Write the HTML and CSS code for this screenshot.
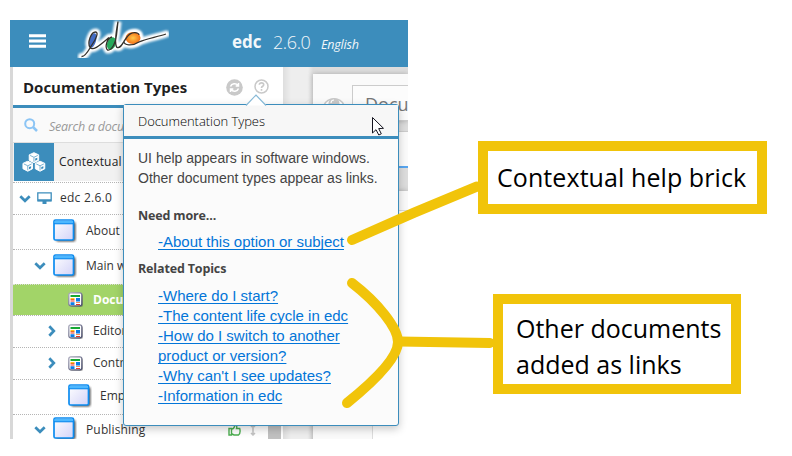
FILE: index.html
```
<!DOCTYPE html>
<html lang="en">
<head>
<meta charset="utf-8">
<title>edc – Documentation Types</title>
<link rel="stylesheet" href="styles.css">
</head>
<body>
<svg width="0" height="0" class="defs" aria-hidden="true">
  <defs>
    <linearGradient id="pane" x1="0" y1="0" x2="1" y2="1"><stop offset="0" stop-color="#fff"/><stop offset="1" stop-color="#d3d3f8"/></linearGradient>
    <linearGradient id="rim" x1="0" y1="0" x2="1" y2="1"><stop offset="0" stop-color="#a9a9bb"/><stop offset="1" stop-color="#4d5170"/></linearGradient>
    <radialGradient id="sun"><stop offset="0" stop-color="#ffc94a"/><stop offset="1" stop-color="#f36f16"/></radialGradient>
    <filter id="soft" x="-30%" y="-30%" width="160%" height="160%"><feGaussianBlur stdDeviation="1"/></filter>
    <symbol id="window" viewBox="0 0 24 24">
      <rect x="3" y="3" width="19.500" height="19.500" rx="2" fill="#333" opacity=".85" filter="url(#soft)"/>
      <rect x="1" y="1" width="19.500" height="20" rx="1.500" fill="url(#pane)" stroke="#0c8cf0" stroke-width="1.700"/>
      <path d="M1.500 2h18.500v2.200H1.500z" fill="#4db8ff"/><path d="M1 4.700h19.500" stroke="#0c8cf0" stroke-width="1.200"/>
    </symbol>
    <symbol id="page" viewBox="0 0 16 16">
      <rect x="2" y="2" width="13" height="13" rx="2" fill="#555" opacity=".5"/>
      <rect x=".8" y=".8" width="13" height="13" rx="2" fill="#fff" stroke="url(#rim)" stroke-width="1.300"/>
      <path d="M2.500 3h9.500v2h-9.500z" fill="#16a835"/><path d="M2.500 6h4v.9h-4z" fill="#ffc000"/><path d="M2.500 7h4v1h-4zM8 10.200h4v.9h-4z" fill="#f06b22"/><path d="M2.500 8.600h4v.8h-4zM8 12h4v.9h-4z" fill="#e7352b"/><path d="M8 6h4v3.400h-4zM2.500 10.200h4v2.700h-4z" fill="#0b7de8"/>
    </symbol>
    <symbol id="down" viewBox="0 0 12 8"><path d="M1.300 1.300 6 5.800l4.700-4.500" fill="none" stroke="#3c8dbc" stroke-width="2.700"/></symbol>
    <symbol id="right" viewBox="0 0 8 12"><path d="M1.300 1.300 5.800 6l-4.500 4.700" fill="none" stroke="#3c8dbc" stroke-width="2.700"/></symbol>
    <symbol id="cube" viewBox="0 0 12 12"><path d="M6 .7 11 3v5.600L6 11.200 1 8.600V3z" fill="#fff" stroke="#fff"/><path d="m2 3.600 4 1.900 4-1.900M6 5.700v4.500" fill="none" stroke="#3c8dbc" stroke-width=".7"/><path d="m7.300 6.900 2.200-1v2.200l-2.200 1.100z" fill="#3c8dbc"/></symbol>
    <path id="script" d="M4.500 36.500C9 37 12 29 15.500 24 19 19 22 12 18.500 12 14 12 10 23 13 27.500 16 31.500 23 25 32 17.500M35 17C30 18 27.500 27 30.500 30 35 31 39 22 39.500 15L41 1.500C39 12 37 24 40 27.500 44 29 46 22 50 17 54 11 62 12 62 15M47 21C46 26 56 26 62 22 68 19 80 17 89 14"/>
  </defs>
</svg>

<div class="app">
  <header class="topbar">
    <svg class="burger" viewBox="0 0 17 14"><path d="M0 1.700h17M0 7h17M0 12.300h17" stroke="#fff" stroke-width="2.900"/></svg>
    <svg class="logo" viewBox="0 0 92 38">
      <use href="#script" fill="none" stroke="#fff" stroke-width="7" stroke-linecap="round" filter="url(#soft)"/>
      <ellipse cx="56" cy="18" rx="10" ry="8.500" fill="#fff" filter="url(#soft)"/>
      <ellipse cx="15.800" cy="20.500" rx="3.200" ry="7.500" transform="rotate(16 15.800 20.500)" fill="#426cc4"/>
      <ellipse cx="34.500" cy="23.500" rx="4.300" ry="6.500" transform="rotate(20 34.500 23.500)" fill="#25a85a"/>
      <ellipse cx="56" cy="18" rx="7.500" ry="6" fill="url(#sun)"/>
      <use href="#script" fill="none" stroke="#33302b" stroke-width="1.300"/>
    </svg>
    <span class="product">edc</span>
    <span class="version">2.6.0</span>
    <span class="lang">English</span>
  </header>

  <div class="body">
    <aside class="sidebar">
      <div class="side-head">
        <h1>Documentation Types</h1>
        <svg class="round" viewBox="0 0 17 17"><circle cx="8.500" cy="8.500" r="8.300" fill="#c9c9c9"/><path d="M4.500 7.500C5.500 4.300 10 3.800 12 6.500M12.500 4v3H9.700M12.500 9.500c-1 3.200-5.500 3.700-7.500 1M4.500 13v-3h2.800" fill="none" stroke="#fff" stroke-width="1.500"/></svg>
        <svg class="help" viewBox="0 0 15 15"><circle cx="7.500" cy="7.500" r="6.500" fill="none" stroke="#c9c9c9" stroke-width="1.500"/><path d="M5.300 5.700c.2-2.400 4.400-2.400 4.400 0 0 1.600-2.200 1.500-2.200 3.200M7.500 10v1.700" fill="none" stroke="#c9c9c9" stroke-width="1.600"/></svg>
      </div>
      <div class="search">
        <svg viewBox="0 0 14 14"><circle cx="5.700" cy="5.700" r="4.500" fill="none" stroke="#8cc5f5" stroke-width="2"/><path d="m9 9 4 4" stroke="#8cc5f5" stroke-width="2.500"/></svg>
        <span>Search a docu</span>
      </div>
      <div class="category">
        <div class="cubes"><svg viewBox="0 0 24 20"><use href="#cube" x="6.200" y="0" width="11.500" height="11.500"/><use href="#cube" x="0" y="8.500" width="11.500" height="11.500"/><use href="#cube" x="12.300" y="8.500" width="11.500" height="11.500"/></svg></div>
        <span>Contextual</span>
      </div>
      <div class="tree">
        <div class="row root"><svg class="chev"><use href="#down"/></svg>
          <svg class="screen" viewBox="0 0 15 12"><path d="M.8.800h13.400v8H.8z" fill="#fff" stroke="#3c8dbc" stroke-width="1.300"/><path d="M1 7.300h13v2H1zM5.500 9h4v3h-4z" fill="#3c8dbc"/></svg><span>edc 2.6.0</span></div>
        <div class="row about"><svg class="win"><use href="#window"/></svg><span>About</span></div>
        <div class="row mainw"><svg class="chev"><use href="#down"/></svg><svg class="win"><use href="#window"/></svg><span>Main w</span></div>
        <div class="row doc active"><svg class="pg"><use href="#page"/></svg><span>Docu</span></div>
        <div class="row doc editor"><svg class="chev-r"><use href="#right"/></svg><svg class="pg"><use href="#page"/></svg><span>Editor</span></div>
        <div class="row doc control"><svg class="chev-r"><use href="#right"/></svg><svg class="pg"><use href="#page"/></svg><span>Contr</span></div>
        <div class="row empty"><svg class="win"><use href="#window"/></svg><span>Emp</span></div>
        <div class="row publishing"><svg class="chev"><use href="#down"/></svg><svg class="win"><use href="#window"/></svg><span>Publishing</span>
          <svg class="thumb" viewBox="0 0 13 12"><path d="M1 4.500h2.500V11H1zM4 5c2 0 2.500-2 3-4 2 0 2 2 1.500 3.500h3.200c.8 3 0 5.500-1.200 6.500H6L4 10" fill="none" stroke="#4caf50" stroke-width="1.400"/></svg>
          <svg class="updown" viewBox="0 0 6 12"><path d="M3 1v10M1 9l2 2 2-2M1 3l2-2 2 2" fill="none" stroke="#c4c4c4" stroke-width="1.500"/></svg>
          <i class="scroll"></i></div>
      </div>
    </aside>
    <main class="content">
      <section class="card">
        <svg class="eye" viewBox="0 0 22 15"><path d="M1 8c4-8.500 16-8.500 20 0-4 8-16 8-20 0z" fill="#fff" stroke="#c9c9c9" stroke-width="1.500"/><circle cx="11" cy="6.500" r="5.500" fill="#c9c9c9"/><path d="M8 6c0-2 1.500-3 3-3" fill="none" stroke="#fff" stroke-width="1.200"/></svg>
        <div class="field">Docu</div>
      </section>
      <section class="tabs"></section>
      <section class="sheet"><div class="ruler"></div><div class="paper"></div></section>
    </main>
  </div>
</div>

<div class="popover">
  <svg class="arrow" viewBox="0 0 22 12"><path d="M1 11.500 11 1l10 10.500" fill="#fff" stroke="#87b9d6" stroke-width="1.200"/></svg>
  <div class="pop-title">Documentation Types</div>
  <div class="pop-body">
    <p>UI help appears in software windows.<br>Other document types appear as links.</p>
    <h2 class="need">Need more...</h2>
    <div class="links"><a>-About this option or subject</a></div>
    <h2 class="related">Related Topics</h2>
    <div class="links second">
      <a>-Where do I start?</a>
      <a>-The content life cycle in edc</a>
      <a>-How do I switch to another<br>product or version?</a>
      <a>-Why can't I see updates?</a>
      <a>-Information in edc</a>
    </div>
  </div>
</div>

<svg class="marks" viewBox="0 0 792 456">
  <g fill="none" stroke="#f1c40a" stroke-width="10" stroke-linecap="round">
    <path d="M352 240 Q414 212 477 186.500"/>
    <path d="M352 283C378 303 398 328 398 342S378 378 347 403"/>
    <path d="M399 341.500 490 343"/>
  </g>
  <path d="M372.500 117.500v15.500l3.500-3.300 2.800 5.300 2.500-1.200-2.600-5.200 4.800-.3z" fill="#fff" stroke="#151520"/>
</svg>
<div class="callout brick"><span>Contextual help brick</span></div>
<div class="callout others"><span>Other documents</span><br><span>added as links</span></div>
</body>
</html>
```
FILE: styles.css
```
* { box-sizing: border-box; }
body { margin: 0; width: 792px; height: 456px; overflow: hidden; position: relative; background: #fff; font-family: "Open Sans", "Noto Sans", sans-serif; font-size: 12px; color: #333; }
svg { display: block; flex: none; }
.defs { position: absolute; }
span { white-space: nowrap; }

.app { width: 398px; height: 419px; margin: 20px 0 0 10px; overflow: hidden; display: flex; flex-direction: column; float: left; }
.topbar { height: 47px; flex: none; background: #3c8dbc; display: flex; align-items: flex-start; color: #f2f7fa; }
.burger { width: 17px; height: 14px; margin: 14px 0 0 19px; }
.logo { width: 92px; height: 38px; margin: 0 0 0 31px; }
.product { font-size: 17px; font-weight: 700; line-height: 44px; margin-left: 63px; width: 41px; }
.version { font-size: 18px; font-weight: 300; line-height: 44px; width: 48px; letter-spacing: -.4px; }
.lang { font-size: 12.500px; font-style: italic; line-height: 49px; letter-spacing: -.2px; }

.body { flex: 1; display: flex; min-height: 0; background: #ececec; }
.sidebar { width: 273px; border-left: 3px solid #d8d8d8; background: #fff; overflow: hidden; flex: none; }
.side-head { height: 41px; border-bottom: 3px solid #3c8dbc; display: flex; align-items: flex-start; }
h1 { margin: 0; padding-left: 10px; width: 213px; font-size: 15px; line-height: 40px; color: #1f1f1f; white-space: nowrap; letter-spacing: 0; }
.round { width: 17px; height: 17px; margin-top: 12px; }
.help { width: 15px; height: 15px; margin: 12px 0 0 11px; }
.search { height: 35px; background: #fafafa; display: flex; align-items: center; font-style: italic; color: #999; border-bottom: 1px solid #ddd; }
.search svg { width: 14px; height: 14px; margin: 0 11px 0 11px; }
.search span { padding-top: 2px; font-size: 12.500px; letter-spacing: -.25px; }
.category { height: 38px; background: #f1f1f1; display: flex; align-items: center; color: #222; padding-left: 1px; }
.category span { letter-spacing: .2px; position: relative; top: -1px; }
.cubes { width: 40px; height: 38px; background: #3c8dbc; padding: 9px 0 0 8px; margin-right: 5px; }
.cubes svg { width: 24px; height: 20px; }
.row { border-top: 1px dotted #b5b5b5; display: flex; align-items: center; position: relative; height: 35px; }
.row span { position: relative; top: -1px; }
.tree { padding-top: 1px; }
.chev { width: 12px; height: 8px; }
.chev-r { width: 8px; height: 12px; }
.win { width: 24px; height: 24px; position: relative; top: -1px; }
.pg { width: 16px; height: 16px; }
.root { height: 32px; padding-left: 6px; }
.root span { letter-spacing: .25px; }
.screen { width: 15px; height: 12px; margin: 0 8px 0 6px; position: relative; top: -1px; }
.about { padding-left: 40px; }
.about span, .mainw span, .publishing span { margin-left: 9px; }
.about span, .mainw span { top: -2px; }
.mainw, .publishing { padding-left: 21px; }
.mainw .chev { position: relative; top: -1px; }
.mainw .win, .publishing .win { margin-left: 7px; }
.doc { height: 32px; padding-left: 35px; }
.doc .chev-r { margin-right: 12px; position: relative; top: -1px; }
.doc .pg { margin-right: 9px; }
.active { padding-left: 55px; background: #a2d468; color: #fff; font-weight: 700; height: 31px; border-color: #ddd; }
.empty { padding-left: 55px; }
.empty span { margin-left: 8px; top: -2px; }
.publishing { height: 31px; }
.publishing span { letter-spacing: .15px; }
.thumb { width: 13px; height: 12px; margin-left: 83px; }
.updown { width: 6px; height: 12px; margin-left: 9px; }
.scroll { width: 13px; height: 31px; background: #c1c1c1; margin-left: auto; margin-right: 2px; }

.content { flex: 1; padding: 7px 0 0 30px; background: linear-gradient(90deg, #dedede, #eee 8px, #eee 25px, #ddd 30px); overflow: hidden; }
.card { height: 47px; background: #fafafa; border-bottom: 1px solid #ccc; box-shadow: 0 0 5px #aaa; display: flex; align-items: flex-start; }
.eye { width: 22px; height: 15px; margin: 23px 7px 0 10px; }
.field { height: 36px; width: 80px; flex: none; margin-top: 11px; border: 1px solid #ccc; padding-left: 12px; font-size: 18px; line-height: 36px; color: #777; background: #fcfcfc; }
.tabs { height: 37px; background: #fbfbfb; margin-top: 10px; border-top: 1px solid #ccc; border-bottom: 2px solid #58a6f0; }
.sheet { height: 260px; margin-top: 23px; background: #fafafa; box-shadow: 0 0 5px #aaa; }
.ruler { height: 20px; border-bottom: 1px solid #ddd; }
.paper { height: 240px; margin-left: 59px; background: #fff; border-left: 1px solid #ddd; }

.popover { position: absolute; left: 123px; top: 104px; width: 276px; height: 322px; border: 1px solid #3c8dbc; border-radius: 3px; background: #fbfbfb; box-shadow: 0 3px 8px rgba(0,0,0,.22); color: #444; }
.arrow { position: absolute; left: 121px; top: -11px; width: 22px; height: 12px; }
.pop-title { height: 34px; border-bottom: 3px solid #3c8dbc; background: #f7f7f7; padding-left: 14px; line-height: 32px; font-size: 13px; color: #000; letter-spacing: -.05px; font-weight: 300; }
.pop-body { padding: 9px 14px; font-family: "Liberation Sans", Arial, sans-serif; font-size: 14px; line-height: 20px; }
p { margin: 0; }
h2 { margin: 0; font: 700 12.500px/20px "Open Sans", sans-serif; letter-spacing: -.15px; }
.need { margin-top: 18px; }
.links { margin: 6px 0 0 20px; color: #0275d8; font-size: 15px; }
.links a { display: block; width: max-content; text-decoration: underline; text-underline-offset: 2px; text-decoration-skip-ink: none; }
.related { margin-top: 7px; }
.second { margin-top: 7px; }

.marks { position: absolute; left: 0; top: 0; width: 792px; height: 456px; }
.callout { position: absolute; border: 10px solid #f1c40a; background: #fff; color: #000; font-size: 25px; line-height: 36px; }
.brick { left: 478px; top: 141px; width: 289px; height: 73px; padding: 8px 0 0 9px; letter-spacing: .08px; }
.others { left: 493px; top: 294px; width: 248px; height: 100px; padding: 6px 0 0 13px; }
```
